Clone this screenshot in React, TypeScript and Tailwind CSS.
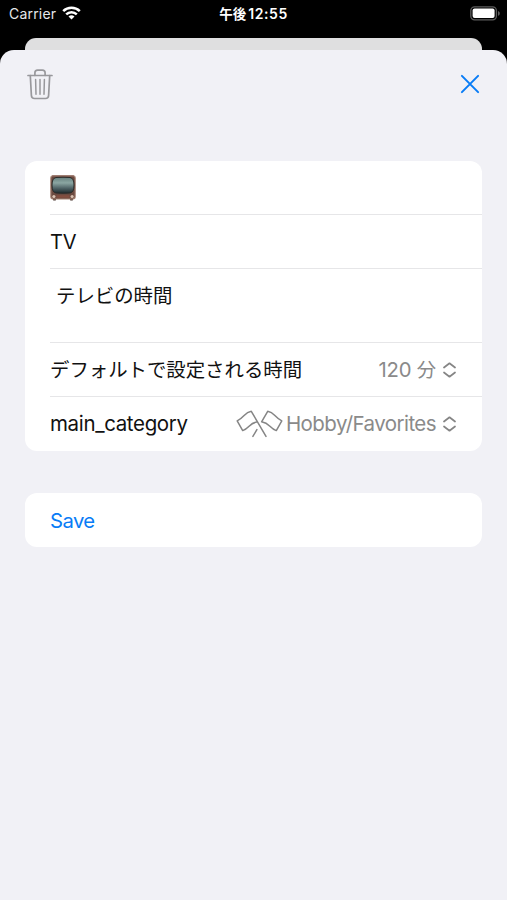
import type { ReactNode } from 'react'

interface RowProps {
  children: ReactNode
  className?: string
}

interface PickerRowProps {
  label: ReactNode
  children: ReactNode
  className?: string
}

function WifiIcon() {
  return (
    <svg width="19" height="14" viewBox="0 0 19 14" fill="none" stroke="white" strokeWidth="2.5">
      <path d="M1.2 5.1a11.8 11.8 0 0 1 16.6 0" />
      <path d="M4.2 8.4a7.5 7.5 0 0 1 10.6 0" />
      <path d="M9.5 13.6 6.5 10.6a4.3 4.3 0 0 1 6 0z" fill="white" stroke="none" />
    </svg>
  )
}

function BatteryIcon() {
  return (
    <svg width="31" height="15" viewBox="0 0 31 15">
      <rect x="0.8" y="0.8" width="25.6" height="13" rx="3.8" fill="none" stroke="#5c5c5c" strokeWidth="1.3" />
      <rect x="2.6" y="2.6" width="22" height="9.4" rx="2" fill="white" />
      <path d="M28 5v4.8c1.1-.4 1.8-1.3 1.8-2.4S29.1 5.4 28 5z" fill="#5c5c5c" />
    </svg>
  )
}

function TrashIcon() {
  return (
    <svg width="26" height="31" viewBox="0 0 26 31" fill="none" stroke="#98989c" strokeWidth="1.7" strokeLinecap="round" strokeLinejoin="round">
      <path d="M1 6.5h24" />
      <path d="M7.9 6.3V3.8c0-1.7 1-2.7 2.7-2.7h4.8c1.7 0 2.7 1 2.7 2.7v2.5" />
      <path d="M3.3 6.7l1.1 19.8c.1 2 1.2 3 3.1 3h11c1.9 0 3-1 3.1-3l1.1-19.8" />
      <path d="M8.6 10.6l.4 14.6M13 10.6v14.6M17.4 10.6l-.4 14.6" strokeWidth="1.5" />
    </svg>
  )
}

function CloseIcon() {
  return (
    <svg width="20" height="20" viewBox="0 0 20 20" fill="none" stroke="#087cf6" strokeWidth="2" strokeLinecap="round">
      <path d="M1.9 1.9l16.2 16.2M18.1 1.9L1.9 18.1" />
    </svg>
  )
}

function TvIcon() {
  return (
    <svg width="26" height="26" viewBox="0 0 26 26">
      <defs>
        <linearGradient id="screen" x1="0" y1="0" x2="0" y2="1">
          <stop offset="0" stopColor="#66807e" />
          <stop offset="0.35" stopColor="#8ba6a2" />
          <stop offset="0.7" stopColor="#4c6063" />
          <stop offset="1" stopColor="#1e292c" />
        </linearGradient>
      </defs>
      <path d="M2.5 23h4l-.8 2.4H3.3zM19.5 23h4l-.8 2.4h-2.4z" fill="#483630" />
      <rect x="0.8" y="0.8" width="24.4" height="23.2" rx="2.2" fill="#6b4a40" stroke="#a68475" strokeWidth="1.1" />
      <path d="M2 1h22" stroke="#8a655a" strokeWidth="1" />
      <path d="M6 2.5Q13 2 20 2.5Q24 3.2 24 10Q24 17.500 20 18Q13 18.600 6 18Q2 17.500 2 10Q2 3.200 6 2.500z" fill="url(#screen)" stroke="#2b2c2a" strokeWidth="1" />
      <rect x="6.5" y="20.200" width="13" height="2.6" fill="#824e40" />
      <circle cx="3.9" cy="21.5" r="1.6" fill="#dbc2b2" />
      <circle cx="22.1" cy="21.5" r="1.6" fill="#dbc2b2" />
    </svg>
  )
}

function FlagsIcon() {
  return (
    <svg width="47" height="28" viewBox="0 0 47 28" fill="none" stroke="#858585" strokeWidth="1.5" strokeLinecap="round" strokeLinejoin="round">
      <path d="M30 26.4L15.3 1.3C8.3 2.4 9 7 1.2 10.8L6.7 20.6C14 17.800 13 13.200 21.400 11.800" />
      <path d="M20.900 19.600L16.900 26.400" />
      <path d="M25.600 11.800L31.700 1.300C38.700 2.400 38 7 45.800 10.800L40.300 20.600C33 17.800 34 13.200 25.600 11.800z" />
    </svg>
  )
}

function ChevronsIcon() {
  return (
    <svg width="13" height="16" viewBox="0 0 13 16" fill="none" stroke="#858585" strokeWidth="1.7" strokeLinecap="round" strokeLinejoin="round">
      <path d="M1 5.5l5.5-4.2L12 5.5M1 10.5l5.5 4.2L12 10.5" />
    </svg>
  )
}

function Row({ children, className = '' }: RowProps) {
  return <div className={`ml-[25px] flex items-center border-b border-[#e6e6e8] ${className}`}>{children}</div>
}

function PickerRow({ label, children, className = '' }: PickerRowProps) {
  return (
    <div className={`ml-[25px] flex h-[54px] items-center justify-between pr-[26px] ${className}`}>
      {label}
      <button className="flex items-center text-[#8a8a8a]">
        {children}
        <ChevronsIcon />
      </button>
    </div>
  )
}

function StatusBar() {
  return (
    <div className="grid h-[38px] grid-cols-3 items-start pt-1 leading-5 text-white">
      <div className="flex items-start pl-[9px]">
        <span className="text-[14px] tracking-[0.2px] text-gray-200">Carrier</span>
        <span className="ml-[6px] pt-[2px]"><WifiIcon /></span>
      </div>
      <span className="text-center text-[13.5px] font-semibold whitespace-nowrap">
        午後<span className="ml-[2px] text-[14px] tracking-[0.6px]">12:55</span>
      </span>
      <div className="flex justify-end pt-[2px] pr-[6px]"><BatteryIcon /></div>
    </div>
  )
}

export default function App() {
  return (
    <div className="flex h-[900px] w-[507px] flex-col overflow-hidden bg-black font-[Inter,'Noto_Sans_CJK_JP',sans-serif] text-[#111]">
      <StatusBar />
      <div className="mx-[25px] h-3 shrink-0 rounded-t-[11px] bg-[#dfdfe0]" />

      <main className="flex-1 rounded-t-[14px] bg-[#f1f1f6]">
        <header className="flex h-[111px] items-start justify-between px-[27px] pt-[19px]">
          <button aria-label="Delete"><TrashIcon /></button>
          <button aria-label="Close" className="pt-[5px]"><CloseIcon /></button>
        </header>

        <section className="mx-[25px] h-[290px] rounded-[12px] bg-white">
          <Row className="h-[54px]"><TvIcon /></Row>
          <Row className="h-[54px] pt-px text-[20px] tracking-[-0.2px]">TV</Row>
          <Row className="h-[74px] items-start pt-3 pl-[6px]">
            <span className="text-[19.4px] leading-[30px]">テレビの時間</span>
          </Row>
          <PickerRow
            className="border-b border-[#e6e6e8]"
            label={<span className="pt-[2px] text-[19.4px]">デフォルトで設定される時間</span>}
          >
            <span className="mr-[7px] pt-[2px] text-[20.3px] tracking-[-0.2px]">
              120 <span className="text-[19.4px]">分</span>
            </span>
          </PickerRow>
          <PickerRow label={<span className="pt-px text-[20.5px] tracking-[-0.35px]">main_category</span>}>
            <FlagsIcon />
            <span className="mr-[7px] ml-[3px] pt-px text-[20.5px] tracking-[-0.56px]">Hobby/Favorites</span>
          </PickerRow>
        </section>

        <section className="mx-[25px] mt-[42px] flex h-[54px] items-center rounded-[12px] bg-white pl-[25px]">
          <button className="pt-[3px] text-[20.3px] tracking-[-0.6px] text-[#087cf6]">Save</button>
        </section>
      </main>
    </div>
  )
}
